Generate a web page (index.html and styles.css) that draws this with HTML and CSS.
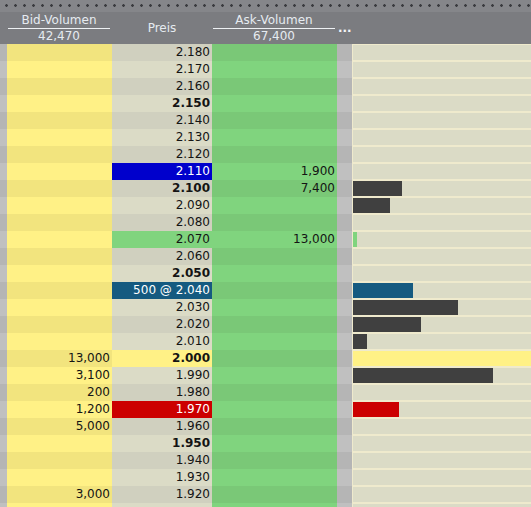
FILE: index.html
```html
<!DOCTYPE html>
<html lang="de">
<head>
    <meta charset="UTF-8">
    <title>Orderbuch</title>
    <link rel="stylesheet" href="styles.css">
</head>
<body>
    <div class="grip"></div>
    <div class="head">
        <div></div>
        <div class="head-vol">
            <div class="head-label">Bid-Volumen</div>
            <div class="head-sum">42,470</div>
        </div>
        <div class="head-price">Preis</div>
        <div class="head-vol">
            <div class="head-label">Ask-Volumen</div>
            <div class="head-sum">67,400</div>
        </div>
        <div class="head-more">...</div>
        <div></div>
        <div></div>
    </div>
    <div id="book"></div>

    <script>
        // price, bid, ask, price style, bar width, bar style, bold
        const rows = [
            ['2.180'], ['2.170'], ['2.160'], ['2.150', '', '', '', 0, '', true],
            ['2.140'], ['2.130'], ['2.120'],
            ['2.110', '', '1,900', 'best-ask'],
            ['2.100', '', '7,400', '', 49, 'dark', true],
            ['2.090', '', '', '', 37, 'dark'],
            ['2.080'],
            ['2.070', '', '13,000', 'last', 4, 'green'],
            ['2.060'], ['2.050', '', '', '', 0, '', true],
            ['500 @ 2.040', '', '', 'own', 60, 'blue'],
            ['2.030', '', '', '', 105, 'dark'],
            ['2.020', '', '', '', 68, 'dark'],
            ['2.010', '', '', '', 14, 'dark'],
            ['2.000', '13,000', '', 'ref', 178, 'yellow', true],
            ['1.990', '3,100', '', '', 140, 'dark'],
            ['1.980', '200'],
            ['1.970', '1,200', '', 'best-bid', 46, 'red'],
            ['1.960', '5,000'],
            ['1.950', '', '', '', 0, '', true],
            ['1.940'], ['1.930'], ['1.920', '3,000'], ['']
        ];

        const book = document.getElementById('book');
        rows.forEach(function (r, i) {
            const row = document.createElement('div');
            row.className = 'row' + (i % 2 === 0 ? ' dim' : '');
            const priceCls = 'price' + (r[3] ? ' ' + r[3] : '') + (r[6] ? ' bold' : '');
            let bar = '';
            if (r[4]) {
                bar = '<div class="bar ' + r[5] + '" style="width:' + r[4] + 'px"></div>';
            }
            row.innerHTML =
                '<div class="side"></div>' +
                '<div class="bid">' + (r[1] || '') + '</div>' +
                '<div class="' + priceCls + '">' + r[0] + '</div>' +
                '<div class="ask">' + (r[2] || '') + '</div>' +
                '<div class="side"></div>' +
                '<div class="sep"></div>' +
                '<div class="depth"><div class="track">' + bar + '</div></div>';
            book.appendChild(row);
        });
    </script>
</body>
</html>
```

FILE: styles.css
```css
body {
    margin: 0;
    width: 531px;
    height: 507px;
    overflow: hidden;
    font-family: "DejaVu Sans", Verdana, sans-serif;
    font-size: 12px;
    color: #141414;
    background: #dbdbc6;
}
.grip {
    height: 12px;
    background-color: #85868a;
    background-image: radial-gradient(circle, #3a3b3f 1px, transparent 1.6px);
    background-size: 9px 11px;
    background-position: 2px 0;
}
.head,
.row {
    display: grid;
    grid-template-columns: 7px 105px 100px 125px 15px 1px 178px;
}
.head {
    height: 32px;
    background: #7b7c80;
    color: #e6ebf0;
}
.head-vol {
    display: flex;
    flex-direction: column;
    align-items: stretch;
    padding: 1px 2px 0 1px;
}
.head-label {
    line-height: 15px;
    text-align: center;
    border-bottom: 1px solid #eef1f4;
}
.head-sum {
    line-height: 14px;
    text-align: center;
}
.head-price {
    line-height: 32px;
    text-align: center;
}
.head-more {
    padding: 9px 0 0 1px;
    line-height: 14px;
    font-weight: bold;
    color: #f4f6f8;
    overflow: hidden;
}
.row {
    height: 17px;
    line-height: 17px;
}
.row > div {
    overflow: hidden;
    white-space: nowrap;
}
.side {
    background: #c0c0c0;
}
.dim .side {
    background: #b5b5b5;
}
.bid {
    background: #fff186;
    text-align: right;
    padding-right: 2px;
}
.dim .bid {
    background: #f2e47e;
}
.price {
    background: #dbdbc6;
    text-align: right;
    padding-right: 2px;
}
.dim .price {
    background: #d0d0bf;
}
.ask {
    background: #80d47e;
    text-align: right;
    padding-right: 2px;
}
.dim .ask {
    background: #7ac877;
}
.bold {
    font-weight: bold;
}
.price.best-ask {
    background: #0000cc;
    color: #fff;
}
.price.last {
    background: #80d47e;
}
.price.own {
    background: #155a80;
    color: #fff;
}
.price.ref {
    background: #fff186;
}
.price.best-bid {
    background: #cc0000;
    color: #fff;
}
.sep {
    background: #efeacd;
}
.depth {
    background: #efeacd;
    padding: 1px 0;
}
.track {
    height: 15px;
    background: #dbdbc6;
}
.bar {
    height: 15px;
}
.bar.dark {
    background: #404040;
}
.bar.green {
    background: #80d47e;
}
.bar.blue {
    background: #155a80;
}
.bar.yellow {
    background: #fff186;
}
.bar.red {
    background: #cc0000;
}
```
